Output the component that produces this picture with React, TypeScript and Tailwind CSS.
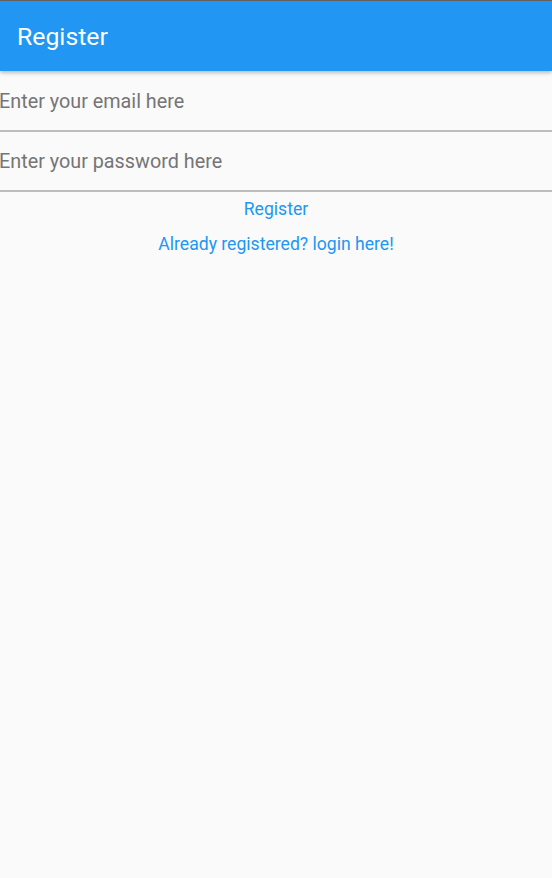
export default function App() {
  return (
    <div
      className="min-h-[878px] bg-[#fafafa]"
      style={{ fontFamily: "Roboto, 'Noto Sans', sans-serif" }}
    >
      {/* app bar */}
      <div className="border-t border-[#616161] bg-[#2196f3] h-[71px] flex items-center px-[17px] shadow-[0_2px_4px_rgba(0,0,0,0.25)] relative z-10">
        <h1 className="text-white text-[24.8px] leading-none pt-[3px]">Register</h1>
      </div>

      {/* fields */}
      <div className="h-[61px] border-b-2 border-[#bdbdbd] flex items-center">
        <input
          placeholder="Enter your email here"
          className="w-full bg-transparent outline-none text-[19.8px] text-[#212121] placeholder:text-[#757575] ml-[-1px] pt-[3px]"
        />
      </div>
      <div className="h-[60px] border-b-2 border-[#bdbdbd] flex items-center">
        <input
          type="password"
          placeholder="Enter your password here"
          className="w-full bg-transparent outline-none text-[19.8px] text-[#212121] placeholder:text-[#757575] ml-[-1px] pt-[2px]"
        />
      </div>

      {/* links */}
      <div className="flex flex-col items-center text-[17.6px] text-[#2196f3]">
        <button className="h-[35px] leading-none">Register</button>
        <button className="h-[36px] leading-none">Already registered? login here!</button>
      </div>
    </div>
  );
}
